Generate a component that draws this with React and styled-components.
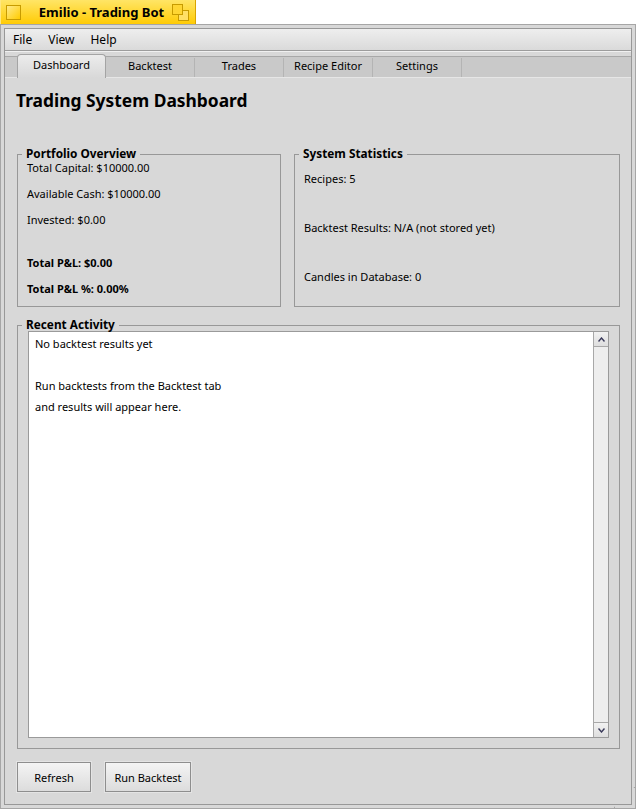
import styled, { createGlobalStyle } from "styled-components"

const GlobalStyle = createGlobalStyle`
    html, body {
        margin: 0;
        padding: 0;
        background: #ffffff;
    }
    body {
        font-family: "Noto Sans", "DejaVu Sans", sans-serif;
        font-size: 11px;
        color: #000;
    }
`

const tabs = ["Dashboard", "Backtest", "Trades", "Recipe Editor", "Settings"]

export default function App() {
    return (
        <>
            <GlobalStyle />
            <TitleTab>
                <CloseBox />
                <WindowTitle>Emilio - Trading Bot</WindowTitle>
                <ZoomBox>
                    <svg width="17" height="17" viewBox="0 0 17 17">
                        <rect x="6.5" y="6.5" width="10" height="10" fill="#ffe066" stroke="#c79b00" />
                        <rect x="0.5" y="0.5" width="10" height="10" fill="#ffd633" stroke="#c79b00" />
                    </svg>
                </ZoomBox>
            </TitleTab>
            <Frame>
                <Inner>
                    <MenuBar>
                        <MenuItem>File</MenuItem>
                        <MenuItem>View</MenuItem>
                        <MenuItem>Help</MenuItem>
                    </MenuBar>
                    <TabStrip>
                        <TabRow>
                            {tabs.map((t, i) => (
                                <Tab key={t} $active={i === 0}>{t}</Tab>
                            ))}
                        </TabRow>
                    </TabStrip>
                    <Content>
                        <PageTitle>Trading System Dashboard</PageTitle>
                        <BoxGrid>
                            <Group>
                                <Legend>Portfolio Overview</Legend>
                                <PortfolioList>
                                    <Line>Total Capital: $10000.00</Line>
                                    <Line>Available Cash: $10000.00</Line>
                                    <Line>Invested: $0.00</Line>
                                    <Line $bold $spaced>Total P&amp;L: $0.00</Line>
                                    <Line $bold>Total P&amp;L %: 0.00%</Line>
                                </PortfolioList>
                            </Group>
                            <Group>
                                <Legend>System Statistics</Legend>
                                <StatsList>
                                    <Line>Recipes: 5</Line>
                                    <Line>Backtest Results: N/A (not stored yet)</Line>
                                    <Line>Candles in Database: 0</Line>
                                </StatsList>
                            </Group>
                        </BoxGrid>
                        <ActivityGroup>
                            <Legend>Recent Activity</Legend>
                            <TextView>
                                <TextBody>
                                    <TextLine>No backtest results yet</TextLine>
                                    <TextLine>&nbsp;</TextLine>
                                    <TextLine>Run backtests from the Backtest tab</TextLine>
                                    <TextLine>and results will appear here.</TextLine>
                                </TextBody>
                                <ScrollBar>
                                    <ArrowButton>
                                        <svg width="7" height="5" viewBox="0 0 7 5">
                                            <path d="M0.5 4.5 L3.5 1 L6.5 4.5" fill="none" stroke="#3a3a5a" strokeWidth="1.4" />
                                        </svg>
                                    </ArrowButton>
                                    <Track />
                                    <ArrowButton $bottom>
                                        <svg width="7" height="5" viewBox="0 0 7 5">
                                            <path d="M0.5 0.5 L3.5 4 L6.5 0.5" fill="none" stroke="#3a3a5a" strokeWidth="1.4" />
                                        </svg>
                                    </ArrowButton>
                                </ScrollBar>
                            </TextView>
                        </ActivityGroup>
                        <ButtonRow>
                            <Button $width={74}>Refresh</Button>
                            <Button $width={86}>Run Backtest</Button>
                        </ButtonRow>
                    </Content>
                </Inner>
                <ResizeCorner />
            </Frame>
        </>
    )
}

const TitleTab = styled.div`
    width: 196px;
    height: 24px;
    box-sizing: border-box;
    display: flex;
    align-items: center;
    padding: 0 6px 0 5px;
    background: linear-gradient(#ffe566, #ffcb05);
    border-right: 1px solid #d9a400;
    border-left: 1px solid #ffe780;
`

const CloseBox = styled.div`
    width: 15px;
    height: 15px;
    box-sizing: border-box;
    border: 1px solid #c79b00;
    background: linear-gradient(135deg, #ffea8a, #ffcb00);
`

const WindowTitle = styled.div`
    flex: 1;
    text-align: center;
    font-weight: bold;
    font-size: 13px;
    padding-left: 10px;
`

const ZoomBox = styled.div`
    display: flex;
    width: 17px;
    height: 17px;
`

const Frame = styled.div`
    position: relative;
    width: 636px;
    height: 785px;
    box-sizing: border-box;
    border: 1px solid #a6a6a6;
    padding: 3px;
    background: #d8d8d8;
`

const Inner = styled.div`
    height: 100%;
    box-sizing: border-box;
    border: 1px solid #989898;
    display: flex;
    flex-direction: column;
`

const MenuBar = styled.div`
    height: 22px;
    box-sizing: border-box;
    display: flex;
    align-items: center;
    font-size: 12px;
    background: linear-gradient(#eeeeee, #dadada);
    border-bottom: 1px solid #9c9c9c;
`

const MenuItem = styled.div`
    padding: 0 8px;
    line-height: 20px;
`

const TabStrip = styled.div`
    height: 25px;
    box-sizing: border-box;
    padding-top: 4px;
    background: #d8d8d8;
    border-top: 1px solid #f0f0f0;
`

const TabRow = styled.div`
    height: 20px;
    display: flex;
    align-items: flex-end;
    padding-left: 12px;
    background: #c9c9c9;
    border-top: 1px solid #a8a8a8;
    border-bottom: 1px solid #e6e6e6;
`

const Tab = styled.div`
    width: 89px;
    box-sizing: border-box;
    text-align: center;
    line-height: ${p => (p.$active ? "20px" : "15px")};
    height: ${p => (p.$active ? "24px" : "19px")};
    margin-bottom: ${p => (p.$active ? "-1px" : "0")};
    background: ${p => (p.$active ? "linear-gradient(#ececec, #d8d8d8)" : "transparent")};
    border: ${p => (p.$active ? "1px solid #a4a4a4" : "none")};
    border-bottom: none;
    border-right: 1px solid ${p => (p.$active ? "#a4a4a4" : "#b4b4b4")};
    border-radius: ${p => (p.$active ? "4px 4px 0 0" : "0")};
    position: relative;
    z-index: ${p => (p.$active ? 1 : 0)};
`

const Content = styled.div`
    flex: 1;
    display: flex;
    flex-direction: column;
    padding: 13px 11px 12px 11px;
    min-height: 0;
`

const PageTitle = styled.div`
    font-size: 17.4px;
    font-weight: bold;
    line-height: 22px;
`

const BoxGrid = styled.div`
    margin: 43px 0 0 1px;
    display: grid;
    grid-template-columns: 264px 1fr;
    column-gap: 13px;
    height: 153px;
`

const Group = styled.div`
    position: relative;
    border: 1px solid #989898;
`

const Legend = styled.span`
    position: absolute;
    top: -9px;
    left: 4px;
    padding: 0 4px;
    background: #d8d8d8;
    font-size: 11.8px;
    font-weight: bold;
    line-height: 14px;
`

const PortfolioList = styled.div`
    display: flex;
    flex-direction: column;
    gap: 10px;
    padding: 5px 9px;
`

const StatsList = styled.div`
    display: flex;
    flex-direction: column;
    gap: 33px;
    padding: 16px 9px;
`

const Line = styled.div`
    line-height: 16px;
    font-weight: ${p => (p.$bold ? "bold" : "normal")};
    margin-top: ${p => (p.$spaced ? "17px" : "0")};
`

const ActivityGroup = styled(Group)`
    flex: 1;
    margin: 18px 0 0 1px;
    padding: 5px 10px 10px 10px;
    display: flex;
    min-height: 0;
`

const TextView = styled.div`
    flex: 1;
    display: flex;
    background: #fff;
    border: 1px solid #9a9a9a;
`

const TextBody = styled.div`
    flex: 1;
    padding: 1px 6px;
`

const TextLine = styled.div`
    line-height: 21px;
`

const ScrollBar = styled.div`
    width: 14px;
    display: flex;
    flex-direction: column;
    border-left: 1px solid #a8a8a8;
    background: #eeeeee;
`

const ArrowButton = styled.div`
    height: 15px;
    box-sizing: border-box;
    display: flex;
    align-items: center;
    justify-content: center;
    background: linear-gradient(#f2f2f2, #dedede);
    border-top: ${p => (p.$bottom ? "1px solid #a8a8a8" : "none")};
    border-bottom: ${p => (p.$bottom ? "none" : "1px solid #a8a8a8")};
`

const Track = styled.div`
    flex: 1;
`

const ButtonRow = styled.div`
    display: flex;
    gap: 14px;
    margin: 13px 0 0 1px;
`

const Button = styled.button`
    width: ${p => p.$width}px;
    height: 30px;
    box-sizing: border-box;
    font-family: "Noto Sans", "DejaVu Sans", sans-serif;
    font-size: 11px;
    color: #000;
    padding: 0;
    background: linear-gradient(#f4f4f4, #dcdcdc);
    border: 1px solid #8e8e8e;
    box-shadow: 0 0 0 1px #e4e4e4;
    border-radius: 0;
`

const ResizeCorner = styled.div`
    position: absolute;
    right: -1px;
    bottom: -1px;
    width: 22px;
    height: 22px;
    border: 1px solid #a6a6a6;
    box-sizing: border-box;
    clip-path: polygon(0 100%, 100% 100%, 100% 0, 90% 0, 90% 90%, 0 90%);
`
